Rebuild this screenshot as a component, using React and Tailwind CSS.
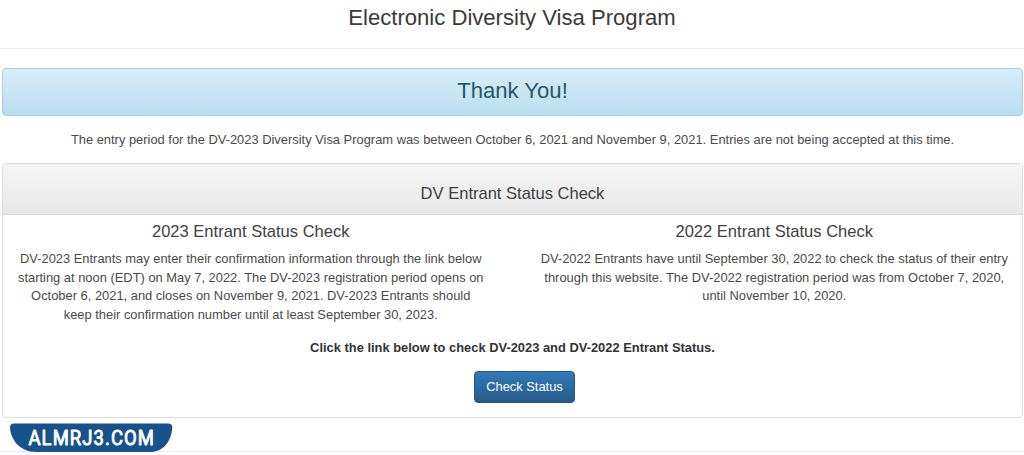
import React from "react";

const columns = [
    {
        title: "2023 Entrant Status Check",
        lines: [
            "DV-2023 Entrants may enter their confirmation information through the link below",
            "starting at noon (EDT) on May 7, 2022. The DV-2023 registration period opens on",
            "October 6, 2021, and closes on November 9, 2021. DV-2023 Entrants should",
            "keep their confirmation number until at least September 30, 2023.",
        ],
    },
    {
        title: "2022 Entrant Status Check",
        lines: [
            "DV-2022 Entrants have until September 30, 2022 to check the status of their entry",
            "through this website. The DV-2022 registration period was from October 7, 2020,",
            "until November 10, 2020.",
        ],
    },
];

const StatusColumn = ({ title, lines }) => (
    <div className="flex-1 text-center whitespace-nowrap">
        <h4 className="text-[16.55px] leading-[18px] text-[#404040]">{title}</h4>
        <p className="mt-[9px] text-[12.9px] leading-[18.5px]">
            {lines.map((line) => (
                <span key={line} className="block">{line}</span>
            ))}
        </p>
    </div>
);

const Watermark = () => (
    <div className="absolute left-[10px] top-[423px] w-[163px] h-[29px]">
        <svg width="163" height="29" viewBox="0 0 163 29">
            <path d="M4 0.5H158Q162.500 0.500 162.300 5C161 19 153 29 140 29H26C11 29 1 18 0 5Q-0.200 0.500 4 0.500Z" fill="#17528a" />
            <g transform="translate(18.5 22) scale(0.88 1)">
                <text
                    textLength="142.500"
                    lengthAdjust="spacing"
                    fill="#fff"
                    stroke="#fff"
                    strokeWidth="0.9"
                    strokeLinejoin="round"
                    fontFamily="Roboto, sans-serif"
                    fontSize="21"
                >
                    ALMRJ3.COM
                </text>
            </g>
        </svg>
    </div>
);

export default function App() {
    return (
        <div className="relative w-[1024px] h-[455px] overflow-hidden bg-white font-['Liberation_Sans',Arial,sans-serif] text-[#4a4a4a]">
            {/* Page header */}
            <header className="h-[49px] pt-[5px] border-b border-[#f0f0f0] text-center">
                <h1 className="text-[22.1px] leading-[26px] text-[#3a3a3a]">Electronic Diversity Visa Program</h1>
            </header>

            <main className="ml-[2px] mr-[1px] pt-[19px]">
                <div className="h-12 rounded border border-[#a9cfdc] bg-linear-to-b from-[#d9edf7] to-[#b9def0] text-center pt-[9px]">
                    <h2 className="text-[22.1px] leading-[26px] text-[#245a68]">Thank You!</h2>
                </div>

                <p className="mt-[15px] text-center text-[12.9px] leading-[18px] whitespace-nowrap">
                    The entry period for the DV-2023 Diversity Visa Program was between October 6, 2021 and November 9, 2021. Entries are not being accepted at this time.
                </p>

                {/* Status panel */}
                <section className="mt-[14px] h-[255px] rounded border border-[#dddddd]">
                    <div className="h-[51px] rounded-t-[3px] border-b border-[#d8d8d8] bg-linear-to-b from-[#f5f5f5] to-[#e8e8e8] pt-[20px] text-center">
                        <h3 className="text-[16.55px] leading-[20px] text-[#404040]">DV Entrant Status Check</h3>
                    </div>
                    <div className="flex gap-[28px] pt-[8px] h-[124px]">
                        {columns.map((c) => (
                            <StatusColumn key={c.title} {...c} />
                        ))}
                    </div>
                    <p className="text-center text-[12.9px] leading-[18px] font-bold text-[#333]">
                        Click the link below to check DV-2023 and DV-2022 Entrant Status.
                    </p>
                    <div className="flex justify-center pt-[14px] pl-6">
                        <button className="w-[101px] h-8 rounded border border-[#245580] bg-linear-to-b from-[#337ab7] to-[#265a88] text-[12.9px] leading-[18px] text-white">
                            Check Status
                        </button>
                    </div>
                </section>
            </main>

            <hr className="mt-[33px] border-[#eeeeee]" />
            <Watermark />
        </div>
    );
}
